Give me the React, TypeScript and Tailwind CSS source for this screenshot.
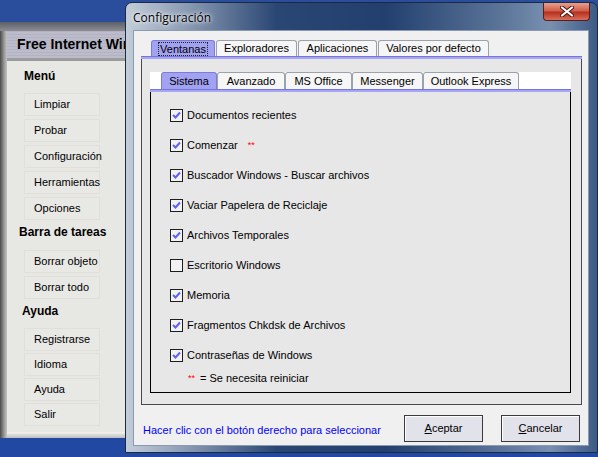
const sideMenu = [
  { kind: 'head', label: 'Menú', pl: 'pl-[17px]', cls: 'h-[24px] mt-[3px]' },
  { kind: 'item', label: 'Limpiar', cls: 'h-[26px] mt-[3px]' },
  { kind: 'item', label: 'Probar', cls: 'h-[26px]' },
  { kind: 'item', label: 'Configuración', cls: 'h-[26px]' },
  { kind: 'item', label: 'Herramientas', cls: 'h-[26px]' },
  { kind: 'item', label: 'Opciones', cls: 'h-[26px]' },
  { kind: 'head', label: 'Barra de tareas', pl: 'pl-[12px]', cls: 'h-[22px]' },
  { kind: 'item', label: 'Borrar objeto', cls: 'h-[26px] mt-[5px]' },
  { kind: 'item', label: 'Borrar todo', cls: 'h-[26px]' },
  { kind: 'head', label: 'Ayuda', pl: 'pl-[15px]', cls: 'h-[22px]' },
  { kind: 'item', label: 'Registrarse', cls: 'h-[25px] mt-[5px]' },
  { kind: 'item', label: 'Idioma', cls: 'h-[25px]' },
  { kind: 'item', label: 'Ayuda', cls: 'h-[25px]' },
  { kind: 'item', label: 'Salir', cls: 'h-[25px]' },
]

const outerTabs = [
  { label: 'Ventanas', w: 'w-[64px]', on: true },
  { label: 'Exploradores', w: 'w-[81px]' },
  { label: 'Aplicaciones', w: 'w-[79px]' },
  { label: 'Valores por defecto', w: 'w-[111px]' },
]

const innerTabs = [
  { label: 'Sistema', w: 'w-[56px]', on: true },
  { label: 'Avanzado', w: 'w-[68px]' },
  { label: 'MS Office', w: 'w-[67px]' },
  { label: 'Messenger', w: 'w-[71px]' },
  { label: 'Outlook Express', w: 'w-[96px]' },
]

const options = [
  { label: 'Documentos recientes', on: true },
  { label: 'Comenzar', on: true, restart: true },
  { label: 'Buscador Windows - Buscar archivos', on: true },
  { label: 'Vaciar Papelera de Reciclaje', on: true },
  { label: 'Archivos Temporales', on: true },
  { label: 'Escritorio Windows', on: false },
  { label: 'Memoria', on: true },
  { label: 'Fragmentos Chkdsk de Archivos', on: true },
  { label: 'Contraseñas de Windows', on: true },
]

function Check({ on }: { on: boolean }) {
  return (
    <span className="w-[13px] h-[13px] flex-none border border-[#1e1e1e] bg-[#f2f2f2] flex items-center justify-center">
      {on && (
        <svg width="9" height="9" viewBox="0 0 9 9">
          <path d="M1 4 L3.5 6.5 L8 1.5" fill="none" stroke="#6060f2" strokeWidth="2" />
        </svg>
      )}
    </span>
  )
}

function AppWindow() {
  return (
    <div className="absolute left-0 top-[22px] w-[126px] h-[416px] flex flex-col overflow-hidden">
      {/* borde superior */}
      <div className="h-[9px] bg-[linear-gradient(180deg,#5c5f68,#8c8d92)]" />
      <div className="flex flex-1 min-h-0">
        <div className="w-[7px] bg-[linear-gradient(90deg,#4a4a4a,#9a9a9a_60%,#c4c4c4)]" />
        <div className="flex-1 min-w-0 flex flex-col bg-[#e7e7e3]">
          <div className="h-[30px] flex-none flex items-center pl-[10px] overflow-hidden bg-[repeating-linear-gradient(0deg,#bcbccb_0px,#bcbccb_2px,#a9a9bd_3px)] border-b-[3px] border-[#9c9c9c]">
            <span className="block min-w-0 flex-1 overflow-hidden font-bold text-[14px] whitespace-nowrap">Free Internet Window Washer</span>
          </div>
          <div className="flex flex-col flex-1">
            {sideMenu.map((m, i) =>
              m.kind === 'head' ? (
                <div key={i} className={`flex-none flex items-center font-bold text-[12px] ${m.pl} ${m.cls}`}>
                  {m.label}
                </div>
              ) : (
                <div key={i} className={`flex-none flex items-center ${m.cls}`}>
                  <div className="ml-[17px] w-[76px] h-[23px] flex items-center pl-[9px] border border-[#e0dfda] bg-[#e8e8e5]">
                    {m.label}
                  </div>
                </div>
              )
            )}
          </div>
          <div className="h-[6px] flex-none bg-[linear-gradient(180deg,#f4f4f2,#bdbdbd)]" />
        </div>
      </div>
    </div>
  )
}

function Dialog() {
  return (
    <div className="absolute left-[125px] top-[2px] w-[473px] h-[451px] rounded-t-[7px] border border-[#1a2a44] flex flex-col bg-[linear-gradient(90deg,#c3cdd9_0%,#8e9eb6_12%,#2a4673_32%,#223f6e_55%,#5c7599_80%,#7890b0_90%,#3d5a86_100%)]">
      {/* barra de título */}
      <div className="h-[27px] flex items-start">
        <span className="mt-[6px] ml-[7px] font-['Open_Sans',sans-serif] text-[12px] text-black [text-shadow:0_0_6px_#ffffff,0_0_3px_#ffffff]">
          Configuración
        </span>
        <div className="ml-auto mr-[7px] w-[47px] h-[18px] rounded-b-[4px] border border-t-0 border-[#5a1e1a] bg-[linear-gradient(180deg,#e9a08e,#d0604c_45%,#b8301e_55%,#d8705a)] flex items-center justify-center">
          <svg width="14" height="11" viewBox="0 0 14 11">
            <path d="M2 1.5 L12 9.5 M12 1.5 L2 9.5" stroke="#4a1410" strokeWidth="4" strokeLinecap="round" />
            <path d="M2 1.5 L12 9.5 M12 1.5 L2 9.5" stroke="#ffffff" strokeWidth="2.2" strokeLinecap="round" />
          </svg>
        </div>
      </div>

      {/* área cliente */}
      <div className="flex-1 ml-[7px] mr-[8px] mb-[6px] bg-[#f0f0f0] border border-[#8a9ab0] flex flex-col pl-[7px] pr-[6px] pt-[9px]">
        <div className="flex h-[16px] pl-[10px] gap-[1px]">
          {outerTabs.map((t) => (
            <div
              key={t.label}
              className={`${t.w} h-full flex items-center justify-center overflow-hidden rounded-t-[3px] border border-b-0 ${
                t.on ? 'bg-[#a2a2f2] border-[#7d7dd6]' : 'bg-[#f6f6f6] border-[#9aa2ae]'
              }`}
            >
              <span className={t.on ? 'outline outline-1 outline-dotted outline-[#222] px-[1px] leading-[12px]' : ''}>{t.label}</span>
            </div>
          ))}
        </div>

        <div className="h-[349px] flex flex-col">
          <div className="h-[3px] border-t border-[#7676d8] bg-[#a6a6f4]" />
          <div className="flex-1 border-l border-r border-b border-[#4a4a4a] bg-[#e7e7e7] pt-[13px] pl-[8px] pr-[10px] pb-[11px] flex flex-col">
            <div className="flex h-[17px] bg-white pl-[11px]">
              {innerTabs.map((t) => (
                <div
                  key={t.label}
                  className={`${t.w} h-full flex items-center justify-center rounded-t-[3px] border border-b-0 ${
                    t.on ? 'bg-[#a2a2f2] border-[#7d7dd6]' : 'bg-[#f6f6f6] border-[#9aa2ae]'
                  }`}
                >
                  {t.label}
                </div>
              ))}
            </div>
            <div className="h-[3px] border-t border-[#7676d8] bg-[#a6a6f4]" />
            <div className="flex-1 border-l border-r border-b border-black bg-[#e7e7e7] pt-[8px] pl-[19px] flex flex-col">
              {options.map((o) => (
                <div key={o.label} className="h-[30px] flex items-center gap-[4px]">
                  <Check on={o.on} />
                  <span>{o.label}</span>
                  {o.restart && <span className="ml-[6px] text-[9px] leading-none text-[#ff0000]">**</span>}
                </div>
              ))}
              <div className="h-[16px] flex items-center pl-[18px] gap-[5px]">
                <span className="text-[9px] leading-none text-[#ff0000]">**</span>
                <span>= Se necesita reiniciar</span>
              </div>
            </div>
          </div>
        </div>

        <div className="flex-1 flex items-start pt-[10px] pl-[2px]">
          <span className="mt-[7px] text-[#0000ff]">Hacer clic con el botón derecho para seleccionar</span>
          <div className="ml-auto mr-[2px] flex gap-[18px]">
            <button className="w-[79px] h-[27px] border border-[#3a3a3a] bg-[#e2e2ea] shadow-[inset_1px_1px_0_#ffffff]">
              <span className="underline">A</span>ceptar
            </button>
            <button className="w-[79px] h-[27px] border border-[#3a3a3a] bg-[#e2e2ea] shadow-[inset_1px_1px_0_#ffffff]">
              <span className="underline">C</span>ancelar
            </button>
          </div>
        </div>
      </div>
    </div>
  )
}

export default function App() {
  return (
    <div className="relative w-[598px] h-[457px] overflow-hidden bg-[linear-gradient(180deg,#2a4d9c,#2148a2)] font-['Liberation_Sans',Arial,sans-serif] text-[11px] text-black">
      <AppWindow />
      <Dialog />
    </div>
  )
}
